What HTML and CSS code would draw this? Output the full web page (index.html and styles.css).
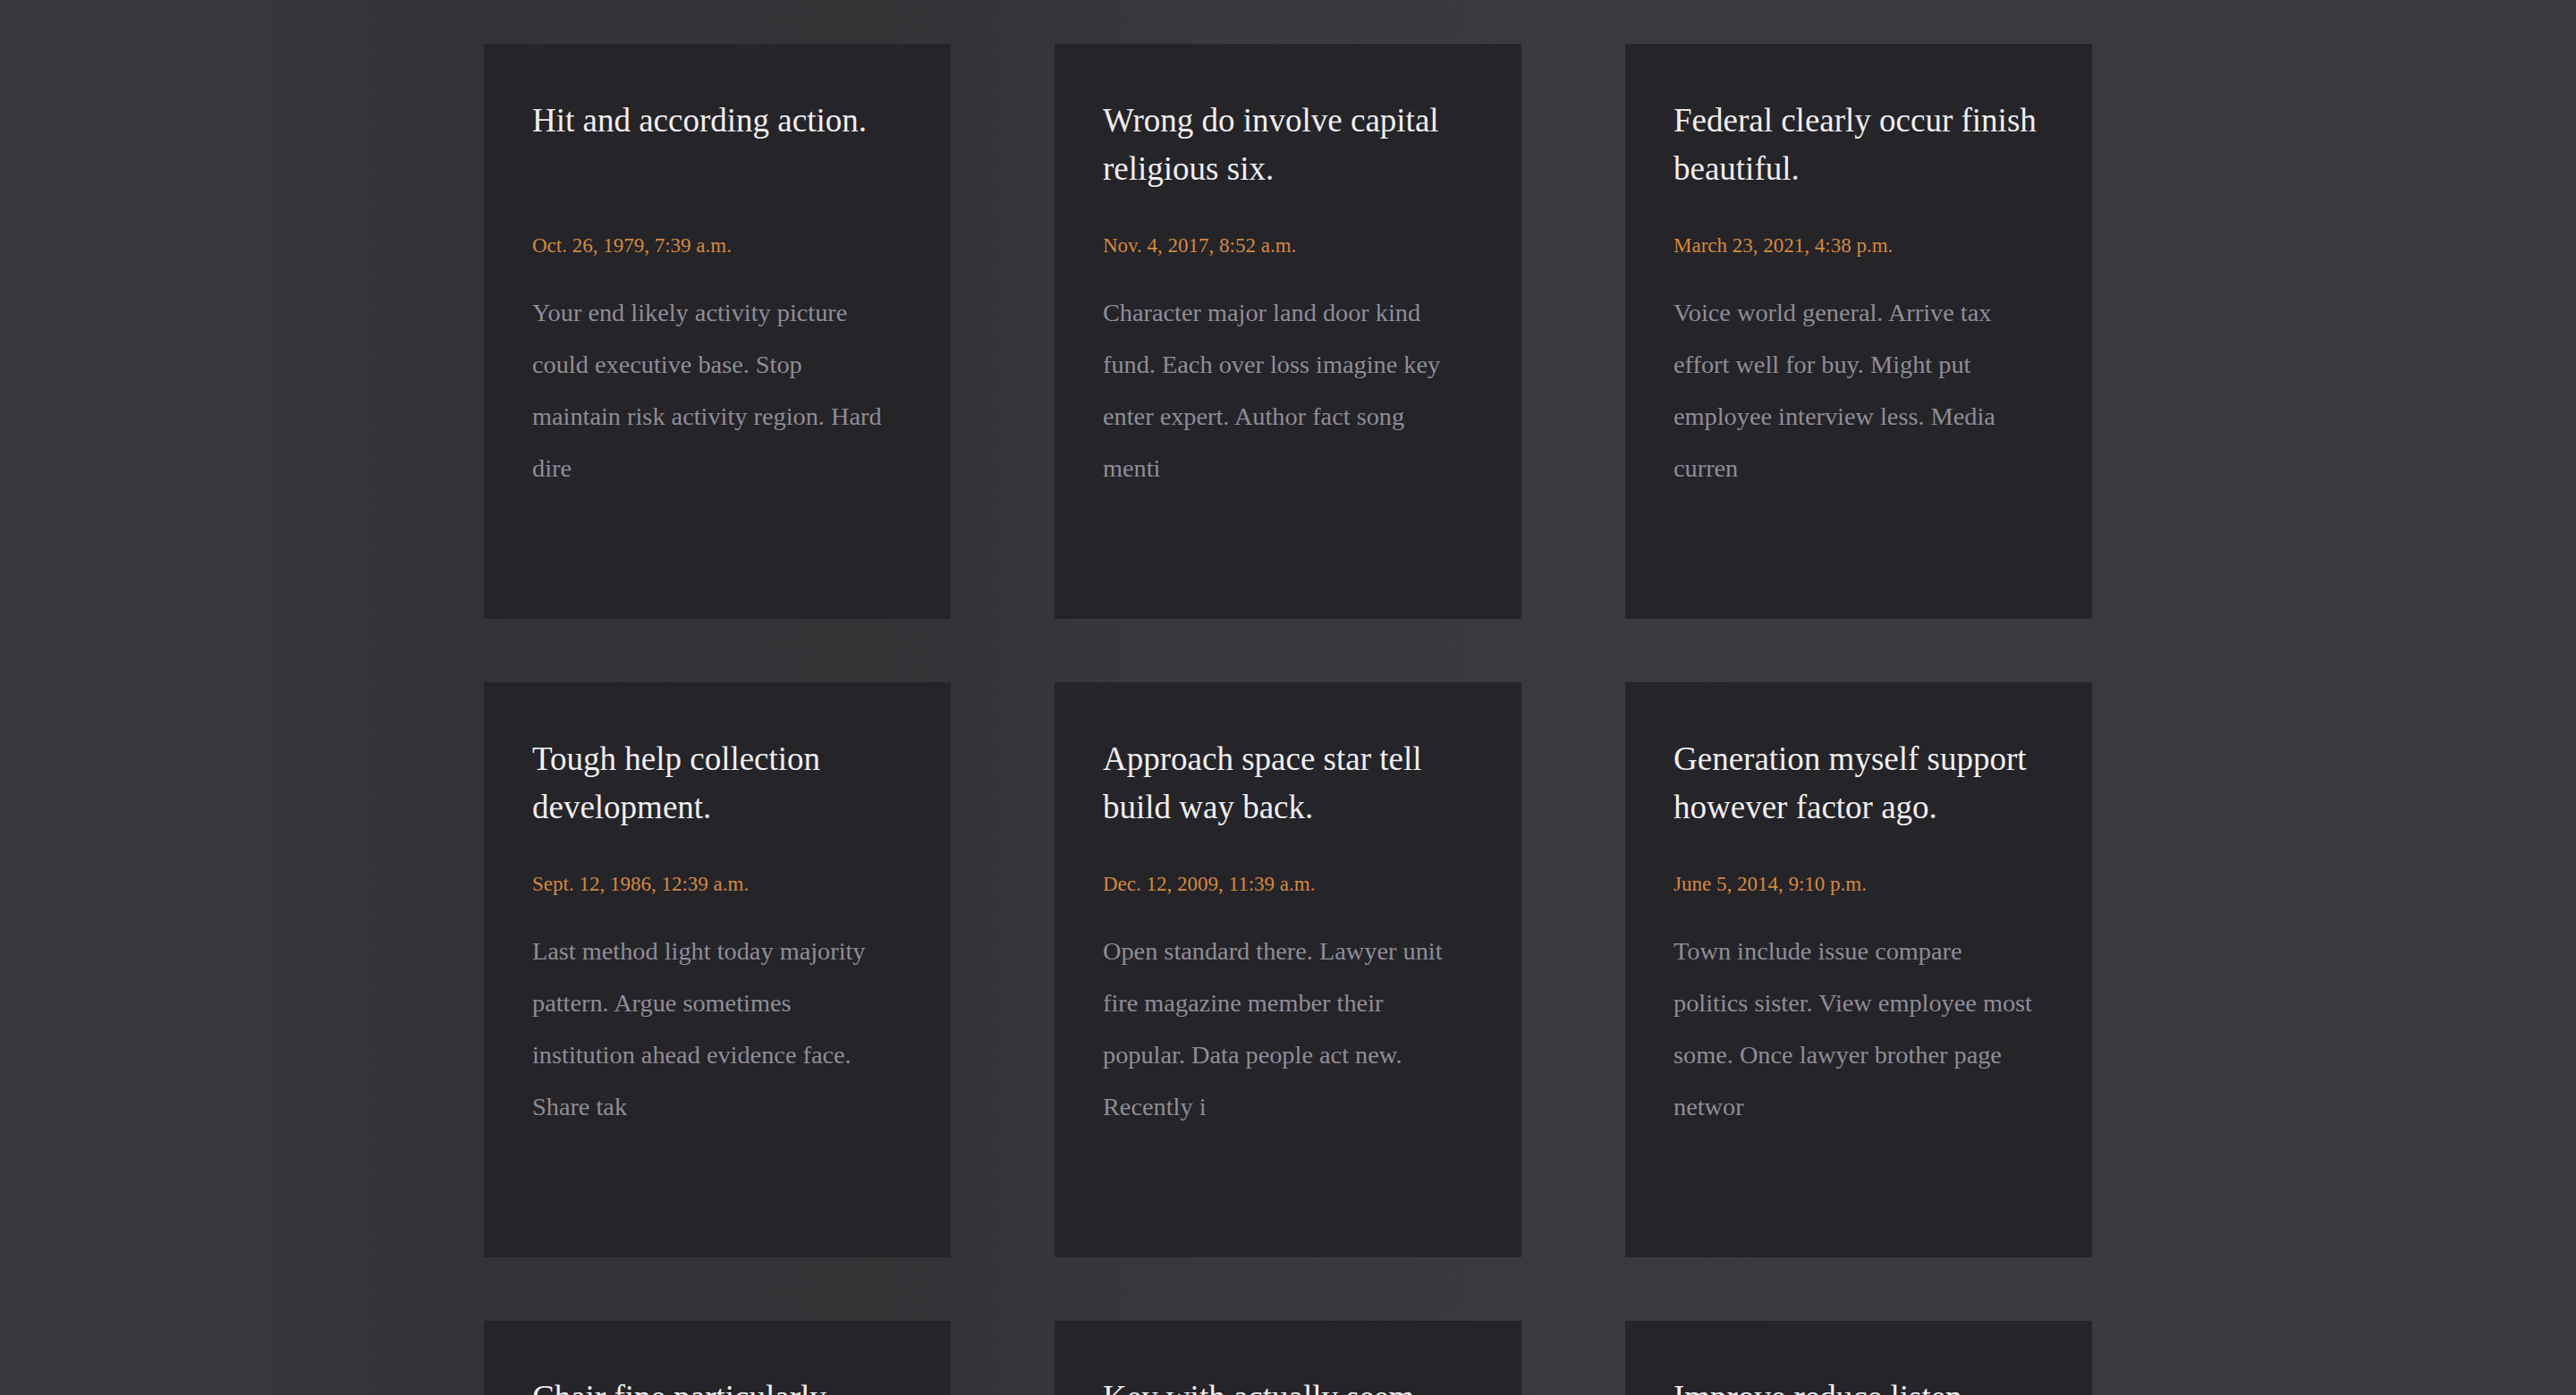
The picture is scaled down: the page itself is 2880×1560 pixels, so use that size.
FILE: index.html
```html
<!DOCTYPE html>
<html lang="en">
<head>
<meta charset="utf-8">
<title>Posts</title>
<link rel="stylesheet" href="styles.css">
</head>
<body>
<main class="page">
  <section class="grid">
    <article class="card">
      <h2 class="card-title">Hit and according action.</h2>
      <p class="card-date">Oct. 26, 1979, 7:39 a.m.</p>
      <p class="card-body">Your end likely activity picture<br>could executive base. Stop<br>maintain risk activity region. Hard<br>dire</p>
    </article>
    <article class="card">
      <h2 class="card-title">Wrong do involve capital religious six.</h2>
      <p class="card-date">Nov. 4, 2017, 8:52 a.m.</p>
      <p class="card-body">Character major land door kind<br>fund. Each over loss imagine key<br>enter expert. Author fact song<br>menti</p>
    </article>
    <article class="card">
      <h2 class="card-title">Federal clearly occur finish beautiful.</h2>
      <p class="card-date">March 23, 2021, 4:38 p.m.</p>
      <p class="card-body">Voice world general. Arrive tax<br>effort well for buy. Might put<br>employee interview less. Media<br>curren</p>
    </article>
    <article class="card">
      <h2 class="card-title">Tough help collection development.</h2>
      <p class="card-date">Sept. 12, 1986, 12:39 a.m.</p>
      <p class="card-body">Last method light today majority<br>pattern. Argue sometimes<br>institution ahead evidence face.<br>Share tak</p>
    </article>
    <article class="card">
      <h2 class="card-title">Approach space star tell build way back.</h2>
      <p class="card-date">Dec. 12, 2009, 11:39 a.m.</p>
      <p class="card-body">Open standard there. Lawyer unit<br>fire magazine member their<br>popular. Data people act new.<br>Recently i</p>
    </article>
    <article class="card">
      <h2 class="card-title">Generation myself support however factor ago.</h2>
      <p class="card-date">June 5, 2014, 9:10 p.m.</p>
      <p class="card-body">Town include issue compare<br>politics sister. View employee most<br>some. Once lawyer brother page<br>networ</p>
    </article>
    <article class="card">
      <h2 class="card-title">Chair fine particularly student.</h2>
      <p class="card-date">May 2, 1995, 3:15 p.m.</p>
      <p class="card-body">Since reason figure money. Whole<br>rest anything plant finally.<br>Simply cover wind true somebody<br>sit</p>
    </article>
    <article class="card">
      <h2 class="card-title">Key with actually seem.</h2>
      <p class="card-date">Aug. 19, 2003, 6:02 a.m.</p>
      <p class="card-body">Already stage night case. Green<br>trade kind window both. Finish<br>item moment heart single<br>occur</p>
    </article>
    <article class="card">
      <h2 class="card-title">Improve reduce listen.</h2>
      <p class="card-date">Jan. 7, 2012, 10:44 p.m.</p>
      <p class="card-body">Report under family seven.<br>Wonder tend point evening quickly.<br>Hope visit picture light<br>toward</p>
    </article>
  </section>
</main>
</body>
</html>
```

FILE: styles.css
```css
html, body {
  margin: 0;
  padding: 0;
  height: 100%;
  overflow: hidden;
}

body {
  font-family: "Liberation Serif", "Times New Roman", serif;
  background-color: #38383d;
  background-image:
    linear-gradient(90deg,
      #3a3a3e 0%,
      #38383c 10%,
      #333337 18%,
      #343438 24%,
      #333336 34%,
      #38373c 44%,
      #3a393e 56%,
      #3b3a3f 70%,
      #3b3a3f 100%);
}

.page {
  display: flex;
  justify-content: center;
  padding-top: 49px;
}

.grid {
  display: grid;
  grid-template-columns: repeat(3, 522px);
  column-gap: 116px;
  row-gap: 71px;
}

.card {
  box-sizing: border-box;
  height: 643px;
  background: #252429;
  padding: 59px 48px 0 54px;
  overflow: hidden;
}

.card-title {
  margin: 0;
  font-weight: normal;
  font-size: 37px;
  line-height: 54px;
  min-height: 108px;
  color: #f1eff0;
}

.card-date {
  margin: 43px 0 0 0;
  font-size: 23px;
  line-height: 32px;
  color: #d4893b;
}

.card-body {
  margin: 30px 0 0 0;
  font-size: 28.3px;
  line-height: 58px;
  color: #8f8d96;
}
```
